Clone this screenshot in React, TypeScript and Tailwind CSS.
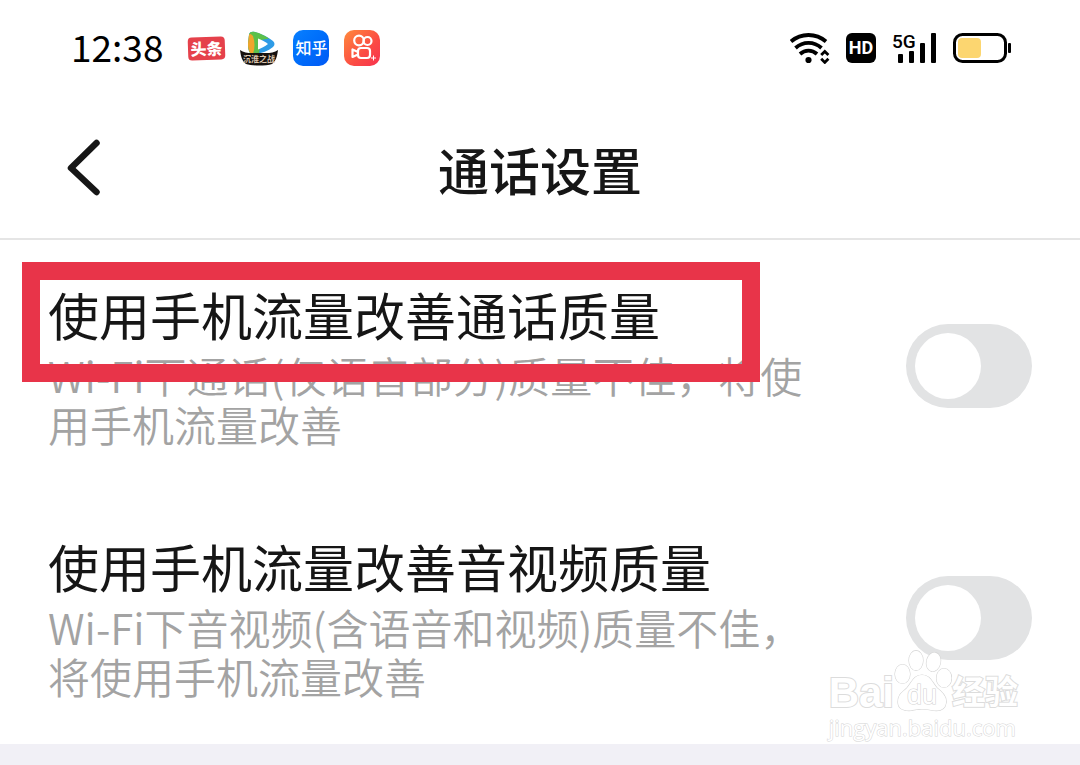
import { useState } from "react"

const settings = [
  {
    id: "call-quality",
    title: "使用手机流量改善通话质量",
    desc: "Wi-Fi下通话(仅语音部分)质量不佳，将使用手机流量改善",
    highlighted: true,
  },
  {
    id: "media-quality",
    title: "使用手机流量改善音视频质量",
    desc: "Wi-Fi下音视频(含语音和视频)质量不佳，将使用手机流量改善",
    highlighted: false,
  },
]

const VideoIcon = () => (
  <svg width="38" height="40" viewBox="0 0 38 40" aria-hidden="true">
    <path d="M9 7C9 4 12 3 15 4C22 6 28 9 33 13C35 15 35 17 33 19C28 23 22 25 16 26H12C9 26 8 20 8 16Z" fill="#2e9be6" />
    <path d="M9 7C9 4 12 3 15 4C20 5 25 8 29 10.500L21 12L19 26H12C9 26 8 20 8 16Z" fill="#5cc04a" />
    <path d="M9 7C10 5 11 6 13 8C15 14 15 20 13 26C9 26 8 20 8 16Z" fill="#f0a52c" />
    <path d="M18 10.500C21 11.500 25 13.500 28 16C25 18.500 21 20.500 18 21.500Z" fill="#fff" />
    <path d="M0 22C5 26 12 25 19 25C26 25 33 26 38 22C37 29 36 33 32 36C26 38 12 38 6 36C2 33 1 29 0 22Z" fill="#17120f" />
    <text x="19" y="34" textAnchor="middle" fontSize="8" fontWeight="700" fill="#dcc6ae">沉淮之战</text>
  </svg>
)

const CameraIcon = () => (
  <svg width="36" height="36" viewBox="0 0 36 36" aria-hidden="true">
    <defs>
      <linearGradient id="camera-bg" x1="0" y1="0" x2="1" y2="1">
        <stop offset="0" stopColor="#ff8a3c" />
        <stop offset="0.6" stopColor="#fb4b44" />
        <stop offset="1" stopColor="#f7324f" />
      </linearGradient>
    </defs>
    <rect width="36" height="36" rx="10" fill="url(#camera-bg)" />
    <g fill="none" stroke="#fff" strokeWidth="2.200" strokeLinejoin="round" strokeLinecap="round">
      <circle cx="15" cy="10.500" r="4.800" />
      <circle cx="23.500" cy="11" r="4" />
      <rect x="14" y="18" width="12" height="10" rx="3" />
      <path d="M14 22L8.500 19.500V27L14 24.500" />
    </g>
    <path d="M29.500 25.500V30.500M27 28H32" stroke="#fff" strokeWidth="1" />
  </svg>
)

const WifiIcon = () => (
  <svg width="40" height="32" viewBox="0 0 40 32" fill="none" stroke="#000" strokeWidth="3.800" aria-hidden="true">
    <path d="M1 9.500C11 .8 26 .8 36 9.500" />
    <path d="M5.500 16C13 9.200 24 9.200 31.500 16" />
    <path d="M10 22C15 17.500 22 17.500 27 22" />
    <circle cx="18.500" cy="28" r="3.100" fill="#000" stroke="none" />
    <path d="M31.200 23L34.800 19.400L38.400 23M31.200 26.800L34.800 30.400L38.400 26.800" strokeWidth="2.800" />
  </svg>
)

const SignalIcon = () => (
  <svg width="45" height="44" viewBox="0 -6 45 44" aria-hidden="true">
    <text x="0" y="16" fontSize="19" fontWeight="500" fontFamily="Roboto, sans-serif">5G</text>
    <rect x="6" y="22" width="5" height="9" rx="1" />
    <rect x="17" y="19" width="5" height="12" rx="1" />
    <rect x="28" y="11" width="5" height="20" rx="1" />
    <rect x="39" y="1" width="5" height="30" rx="1" />
  </svg>
)

const BatteryIcon = () => (
  <svg width="58" height="32" viewBox="0 0 58 32" aria-hidden="true">
    <rect x="1.500" y="2.500" width="51" height="27" rx="8" fill="none" stroke="#000" strokeWidth="3" />
    <rect x="5" y="6" width="23" height="20" rx="4" fill="#fcd670" />
    <rect x="55" y="11" width="3" height="10" rx="1" />
  </svg>
)

const StatusBar = () => (
  <div className="flex h-24 items-center justify-between pl-[71px] pr-[69px]">
    <div className="flex items-center gap-[15px]">
      <span className="mr-2.5 pb-1 text-[37px] leading-[48px] text-black">12:38</span>
      <span className="flex h-[23px] w-[37px] -rotate-2 items-center justify-center rounded-sm bg-[#e5414b] pb-0.5 text-base leading-none font-black text-white">
        头条
      </span>
      <VideoIcon />
      <span className="flex size-9 items-center justify-center rounded-[10px] bg-linear-to-br from-[#0a80ff] to-[#0058f5] pb-0.5 text-base leading-none font-medium text-white">
        知乎
      </span>
      <CameraIcon />
    </div>
    <div className="flex items-center gap-4">
      <WifiIcon />
      <span className="flex size-[30px] items-center justify-center rounded-md bg-black font-['Roboto',sans-serif] text-lg leading-none font-bold text-white">
        HD
      </span>
      <SignalIcon />
      <BatteryIcon />
    </div>
  </div>
)

const Header = () => (
  <header className="grid h-36 grid-cols-[1fr_auto_1fr] items-center border-b-2 border-[#e5e5e5] px-[67px]">
    <button type="button" aria-label="返回" className="justify-self-start">
      <svg width="34" height="58" viewBox="0 0 34 58" fill="none" stroke="#161616" strokeWidth="6.500" strokeLinecap="round" strokeLinejoin="round">
        <path d="M29.500 5L4 30L29.500 54" />
      </svg>
    </button>
    <h1 className="pt-1 text-[51px] leading-[60px] font-medium text-[#161616]">通话设置</h1>
  </header>
)

type SettingRowProps = {
  id: string
  title: string
  desc: string
  highlighted: boolean
}

const SettingRow = ({ id, title, desc, highlighted }: SettingRowProps) => {
  const [enabled, setEnabled] = useState(false)

  return (
    <li className="relative flex min-h-[252px] items-center gap-24 px-12">
      <div className="flex-1">
        <label htmlFor={id} className="block text-[51px] leading-[60px] text-[#161616]">
          {title}
        </label>
        <p id={`${id}-desc`} className="mt-1.5 text-[42px] leading-[49px] font-[350] text-[#a3a3a3]">
          {desc}
        </p>
      </div>
      <input
        id={id}
        type="checkbox"
        role="switch"
        aria-describedby={`${id}-desc`}
        checked={enabled}
        onChange={(e) => setEnabled(e.target.checked)}
        className="h-[84px] w-[126px] shrink-0 appearance-none rounded-full bg-[#e2e3e4] p-[9px] before:block before:size-[66px] before:rounded-full before:bg-white checked:bg-[#07c160] checked:before:ml-auto"
      />
      {highlighted && (
        <div className="pointer-events-none absolute top-[22px] left-[22px] h-[120px] w-[738px] border-[18px] border-[#e83449]" />
      )}
    </li>
  )
}

const Watermark = () => (
  <div className="pointer-events-none absolute right-[62px] bottom-0.5 flex flex-col text-white [paint-order:stroke] [-webkit-text-stroke:2px_#dcdcdc]">
    <div className="flex items-end">
      <span className="font-['Liberation_Sans',sans-serif] text-[42px] leading-[38px] font-bold">Bai</span>
      <svg width="58" height="62" viewBox="0 0 58 62" fill="#fff" stroke="#d4d4d4" strokeWidth="1.200" aria-hidden="true">
        <ellipse cx="8.500" cy="24" rx="7.500" ry="9.500" />
        <ellipse cx="22" cy="10.500" rx="7" ry="9.800" />
        <ellipse cx="39.500" cy="12" rx="7" ry="9.500" transform="rotate(12 39.500 12)" />
        <ellipse cx="50" cy="28" rx="7.500" ry="9.500" />
        <path d="M28 25C36 25 38 32 43 38C49 43 53 47 52 53C51 60 45 61 40 60.500C32 58.500 24 58.500 17 60.500C10 61 4 59 4 52C4 44 9 42 13 38C18 32 20 25 28 25Z" />
        <text x="28" y="54" textAnchor="middle" fontSize="27" fontFamily="Liberation Sans, sans-serif">du</text>
      </svg>
      <span className="pb-1 text-[33px] leading-[36px] font-bold">经验</span>
    </div>
    <span className="font-['Open_Sans',sans-serif] text-[22px] leading-[30px] [-webkit-text-stroke:1px_#d4d4d4]">
      jingyan.baidu.com
    </span>
  </div>
)

const App = () => {
  return (
    <div className="min-h-screen bg-[#f1f0f6] font-['Noto_Sans_CJK_SC',sans-serif]">
      <main className="relative bg-white">
        <StatusBar />
        <Header />
        <ul>
          {settings.map((item) => (
            <SettingRow key={item.id} {...item} />
          ))}
        </ul>
        <Watermark />
      </main>
    </div>
  )
}

export default App
